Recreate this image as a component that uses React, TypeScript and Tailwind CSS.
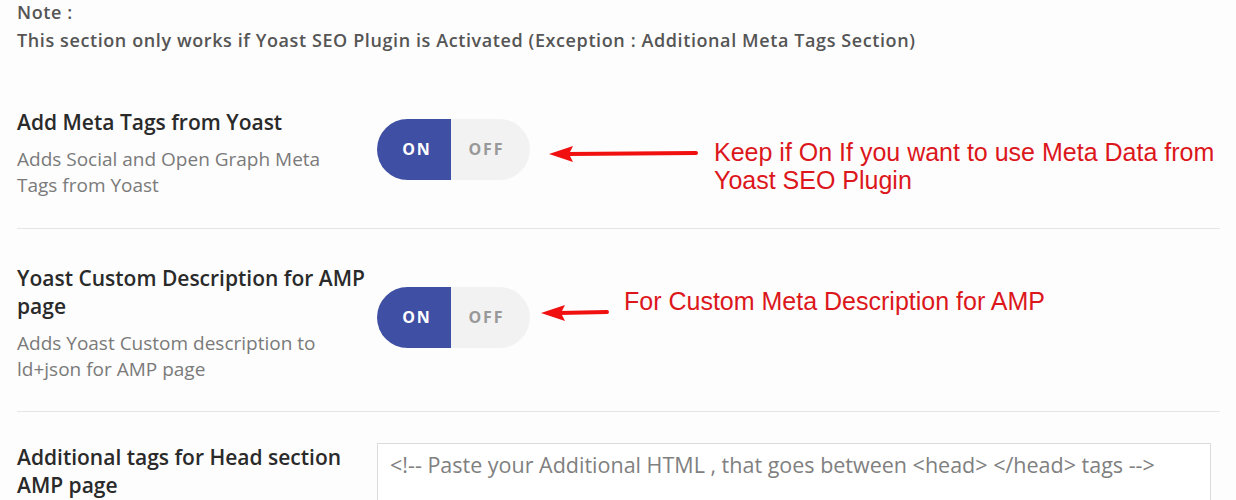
import React from 'react';

const Arrow: React.FC<{ width: number }> = ({ width }) => (
  <svg width={width} height="20" viewBox={`0 0 ${width} 20`} className="shrink-0">
    <line x1="18" y1="10" x2={width - 2} y2="9" stroke="#f01010" strokeWidth="4" strokeLinecap="round" />
    <polygon points="0,10 24,2 20,10 24,18" fill="#f01010" />
  </svg>
);

const Toggle: React.FC = () => (
  <div className="flex h-[61px] w-[153px] shrink-0 overflow-hidden rounded-full text-[16px] font-bold tracking-[0.12em]">
    <div className="flex w-[74px] items-center justify-center bg-[#3f4fa3] pl-[6px] text-white">ON</div>
    <div className="flex flex-1 items-center justify-center bg-[#f2f2f2] pr-[8px] text-[#999]">OFF</div>
  </div>
);

export default function App() {
  return (
    <div className="h-[500px] overflow-hidden bg-[#fdfdfd] pl-[17px] pr-[16px] font-['Open_Sans',sans-serif] text-[#333]">
      {/* Note */}
      <div className="-mt-[2px] text-[18px] font-semibold leading-[28px] tracking-[0.6px] text-[#555]">
        <p>Note :</p>
        <p>This section only works if Yoast SEO Plugin is Activated (Exception : Additional Meta Tags Section)</p>
      </div>

      {/* Row 1 */}
      <div className="flex items-center border-b border-[#e6e6e6] pt-[54px] pb-[30px]">
        <div className="w-[360px] shrink-0">
          <h3 className="text-[21px] font-semibold leading-[28px] text-[#2a2a2a]">Add Meta Tags from Yoast</h3>
          <p className="mt-[10px] pr-[30px] text-[19px] leading-[26px] text-[#7a7a7a]">
            Adds Social and Open Graph Meta Tags from Yoast
          </p>
        </div>
        <div className="-mt-[8px] flex items-center">
          <Toggle />
          <div className="relative top-[5px] ml-[19px]">
            <Arrow width={149} />
          </div>
          <p className="relative top-[17px] ml-[16px] font-['Liberation_Sans',Arial,sans-serif] text-[25px] leading-[28px] text-[#dc171c]">
            Keep if On If you want to use Meta Data from
            <br />
            Yoast SEO Plugin
          </p>
        </div>
      </div>

      {/* Row 2 */}
      <div className="flex items-center border-b border-[#e6e6e6] pt-[35px] pb-[29px]">
        <div className="w-[360px] shrink-0">
          <h3 className="text-[21px] font-semibold leading-[28px] text-[#2a2a2a]">Yoast Custom Description for AMP page</h3>
          <p className="mt-[10px] pr-[30px] text-[19px] leading-[26px] text-[#7a7a7a]">
            Adds Yoast Custom description to ld+json for AMP page
          </p>
        </div>
        <div className="-mt-[12px] flex items-center">
          <Toggle />
          <div className="relative -top-[4px] ml-[11px]">
            <Arrow width={68} />
          </div>
          <p className="relative -top-[16px] ml-[15px] font-['Liberation_Sans',Arial,sans-serif] text-[25px] leading-[28px] text-[#dc171c]">
            For Custom Meta Description for AMP
          </p>
        </div>
      </div>

      {/* Row 3 */}
      <div className="flex pt-[31px]">
        <div className="w-[360px] shrink-0">
          <h3 className="text-[21px] font-semibold leading-[28px] text-[#2a2a2a]">Additional tags for Head section AMP page</h3>
        </div>
        <textarea
          className="h-[120px] w-[834px] resize-none border border-[#dcdcdc] bg-white px-[12px] py-[6px] text-[21.5px] leading-[30px] text-[#555] placeholder:text-[#808080] focus:outline-none"
          placeholder="<!-- Paste your Additional HTML , that goes between <head> </head> tags -->"
        />
      </div>
    </div>
  );
}
